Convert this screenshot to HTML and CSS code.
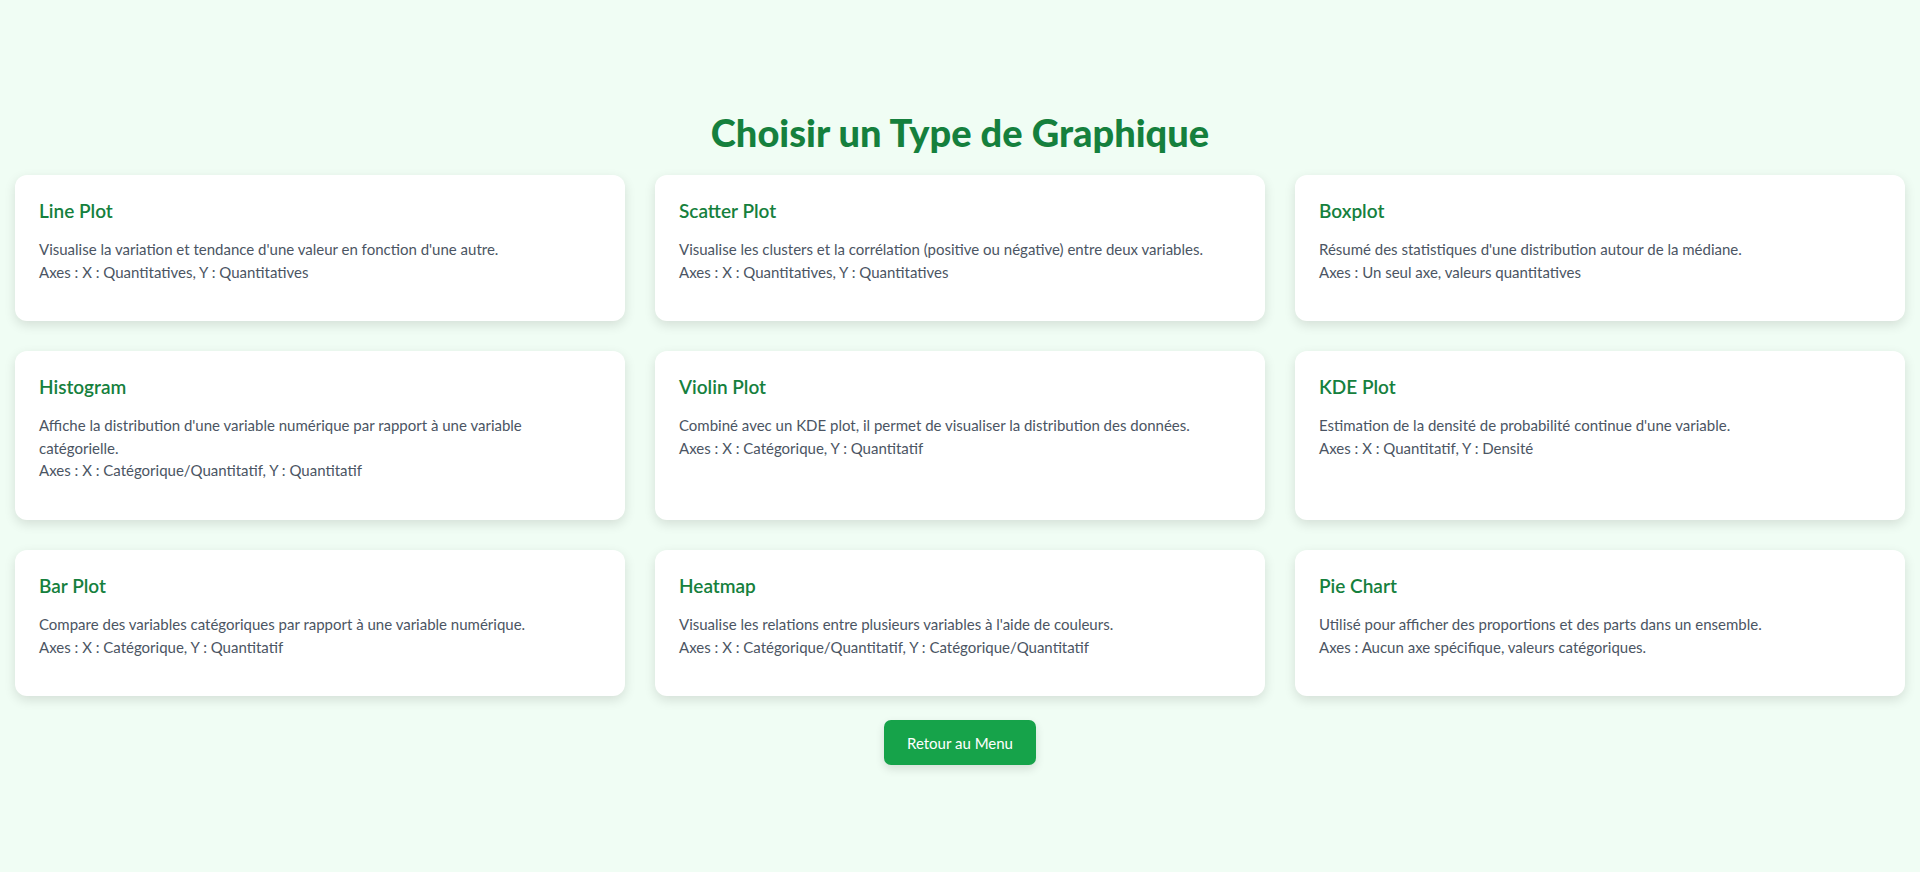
FILE: index.html
```html
<!DOCTYPE html>
<html lang="fr">
<head>
<meta charset="utf-8">
<title>Choisir un Type de Graphique</title>
<link rel="stylesheet" href="styles.css">
</head>
<body>
<main class="page">
  <h1 class="title">Choisir un Type de Graphique</h1>
  <div class="grid">
    <div class="card">
      <h3 class="card-title">Line Plot</h3>
      <p class="card-text">Visualise la variation et tendance d'une valeur en fonction d'une autre.<br>Axes : X : Quantitatives, Y : Quantitatives</p>
    </div>
    <div class="card">
      <h3 class="card-title">Scatter Plot</h3>
      <p class="card-text">Visualise les clusters et la corrélation (positive ou négative) entre deux variables.<br>Axes : X : Quantitatives, Y : Quantitatives</p>
    </div>
    <div class="card">
      <h3 class="card-title">Boxplot</h3>
      <p class="card-text">Résumé des statistiques d'une distribution autour de la médiane.<br>Axes : Un seul axe, valeurs quantitatives</p>
    </div>
    <div class="card">
      <h3 class="card-title">Histogram</h3>
      <p class="card-text">Affiche la distribution d'une variable numérique par rapport à une variable catégorielle.<br>Axes : X : Catégorique/Quantitatif, Y : Quantitatif</p>
    </div>
    <div class="card">
      <h3 class="card-title">Violin Plot</h3>
      <p class="card-text">Combiné avec un KDE plot, il permet de visualiser la distribution des données.<br>Axes : X : Catégorique, Y : Quantitatif</p>
    </div>
    <div class="card">
      <h3 class="card-title">KDE Plot</h3>
      <p class="card-text">Estimation de la densité de probabilité continue d'une variable.<br>Axes : X : Quantitatif, Y : Densité</p>
    </div>
    <div class="card">
      <h3 class="card-title">Bar Plot</h3>
      <p class="card-text">Compare des variables catégoriques par rapport à une variable numérique.<br>Axes : X : Catégorique, Y : Quantitatif</p>
    </div>
    <div class="card">
      <h3 class="card-title">Heatmap</h3>
      <p class="card-text">Visualise les relations entre plusieurs variables à l'aide de couleurs.<br>Axes : X : Catégorique/Quantitatif, Y : Catégorique/Quantitatif</p>
    </div>
    <div class="card">
      <h3 class="card-title">Pie Chart</h3>
      <p class="card-text">Utilisé pour afficher des proportions et des parts dans un ensemble.<br>Axes : Aucun axe spécifique, valeurs catégoriques.</p>
    </div>
  </div>
  <div class="actions">
    <button class="btn" type="button">Retour au Menu</button>
  </div>
</main>
</body>
</html>
```

FILE: styles.css
```css
* { box-sizing: border-box; }
html, body {
  margin: 0;
  padding: 0;
  background: #f0fdf4;
  font-family: Lato, "Noto Sans", sans-serif;
}
.page {
  padding: 108px 15px 40px;
  display: flex;
  flex-direction: column;
  align-items: center;
}
.title {
  margin: 0 0 19px;
  font-family: Lato, sans-serif;
  font-weight: 900;
  font-size: 38px;
  line-height: 48px;
  color: #15803d;
  text-align: center;
}
.grid {
  width: 100%;
  display: grid;
  grid-template-columns: repeat(3, 1fr);
  gap: 30px;
}
.card {
  background: #ffffff;
  border-radius: 12px;
  padding: 24px;
  box-shadow: 0 4px 12px rgba(0, 0, 0, 0.12);
}
.card-title {
  margin: 0 0 16px;
  font-size: 19px;
  line-height: 23px;
  font-weight: 600;
  color: #15803d;
}
.card-text {
  margin: 0 0 14px;
  font-size: 15px;
  line-height: 22.6px;
  color: #4b5563;
}
.actions {
  margin-top: 24px;
  display: flex;
  justify-content: center;
}
.btn {
  width: 152px;
  height: 45px;
  border: none;
  border-radius: 7px;
  background: #16a34a;
  color: #ffffff;
  font-family: Lato, sans-serif;
  font-size: 15px;
  box-shadow: 0 4px 10px rgba(0, 0, 0, 0.12);
  cursor: pointer;
}
```
